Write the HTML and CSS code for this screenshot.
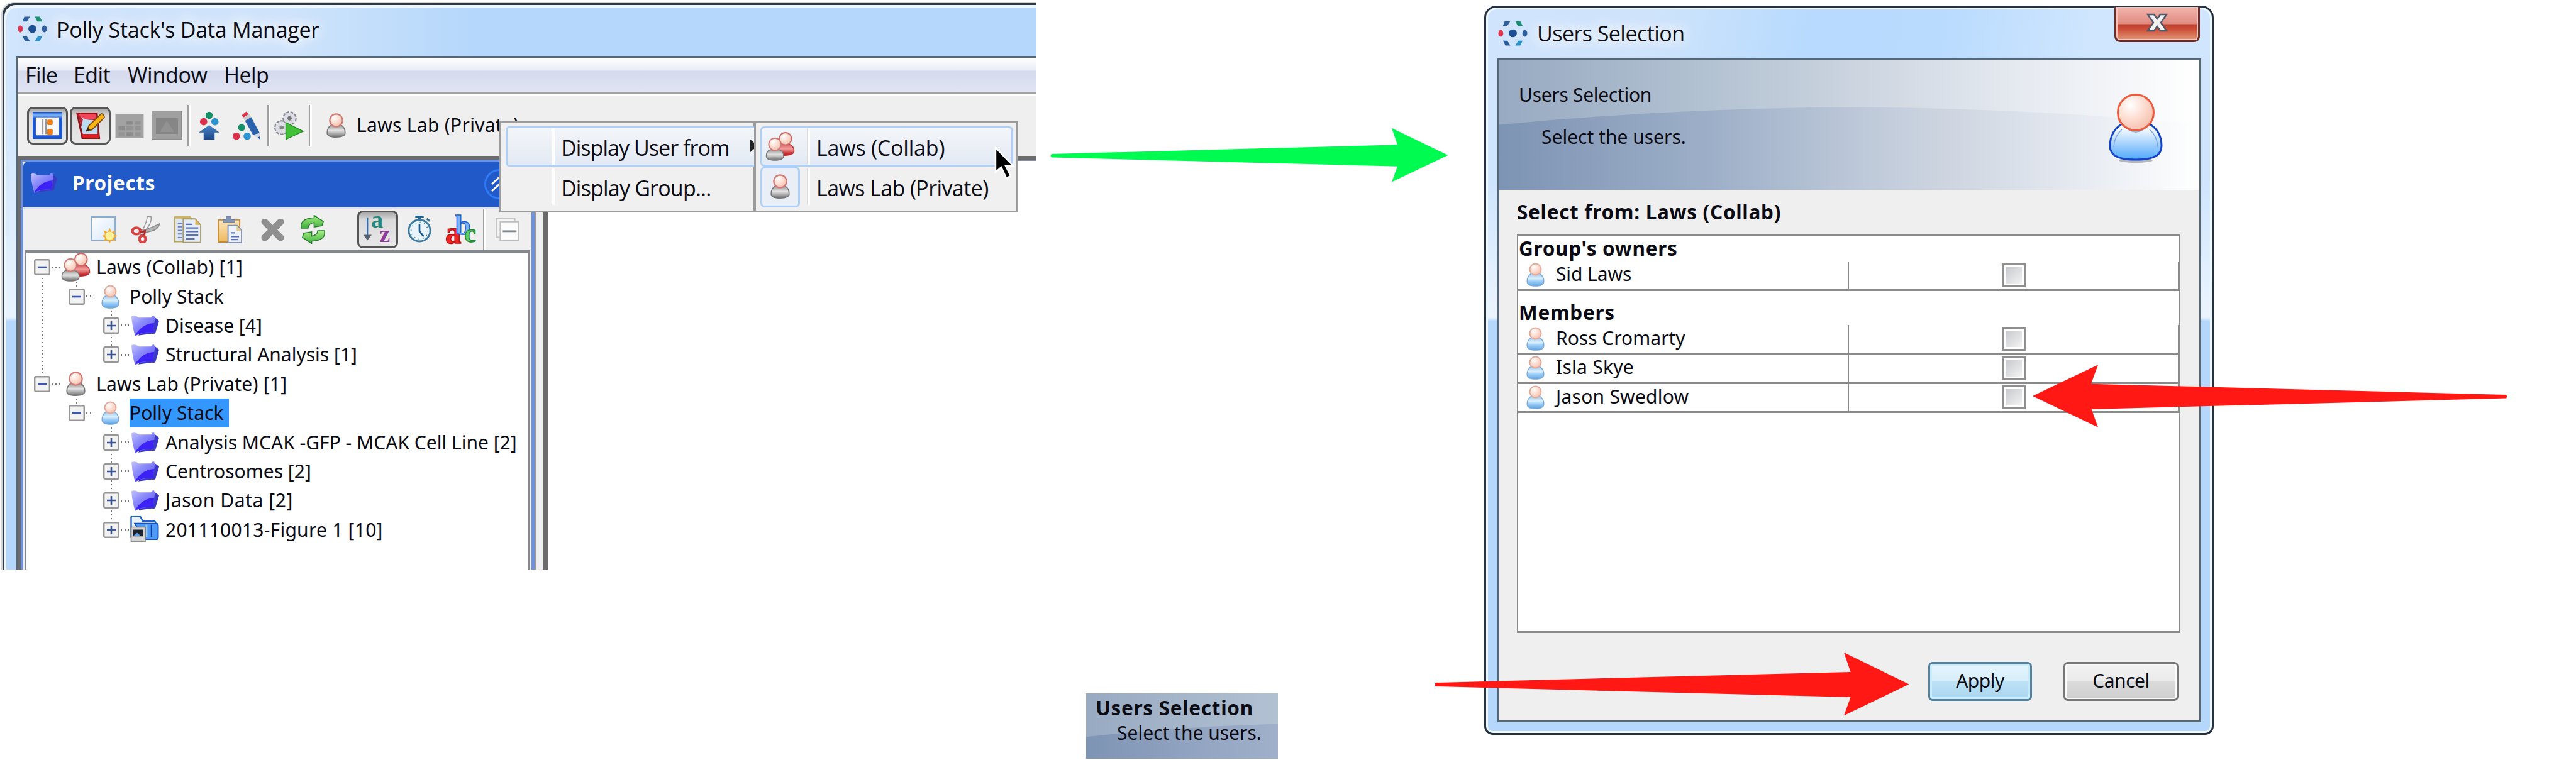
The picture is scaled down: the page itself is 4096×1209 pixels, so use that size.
FILE: index.html
```html
<!DOCTYPE html>
<html lang="en">
<head>
<meta charset="utf-8">
<title>Polly Stack's Data Manager</title>
<link rel="stylesheet" href="styles.css">
</head>
<body>
<svg class="sprite" width="0" height="0" aria-hidden="true">
  <defs>
    <radialGradient id="skin" cx=".35" cy=".3" r=".8"><stop offset="0" stop-color="#fff"/><stop offset=".5" stop-color="#fddccf"/><stop offset="1" stop-color="#f3bba8"/></radialGradient>
    <linearGradient id="bodyBlue" x2="0" y2="1"><stop offset=".1" stop-color="#fff"/><stop offset="1" stop-color="#4fa8fb"/></linearGradient>
    <linearGradient id="bodySoft" x2="0" y2="1"><stop offset="0" stop-color="#9cc8f2"/><stop offset=".4" stop-color="#dcf0fc"/><stop offset=".6" stop-color="#9fd0f8"/><stop offset="1" stop-color="#5fa0e0"/></linearGradient>
    <linearGradient id="bodyGrey" x2="0" y2="1"><stop offset="0" stop-color="#999"/><stop offset=".45" stop-color="#e2e2e2"/><stop offset="1" stop-color="#6e6e6e"/></linearGradient>
    <linearGradient id="bodyRed" x2="0" y2="1"><stop offset="0" stop-color="#e06060"/><stop offset=".4" stop-color="#f09a9a"/><stop offset="1" stop-color="#b80d14"/></linearGradient>
    <linearGradient id="folder" x1="0" y1="0" x2=".9" y2="1"><stop offset="0" stop-color="#c4c4ff"/><stop offset=".4" stop-color="#8c8cfb"/><stop offset="1" stop-color="#5a50f8"/></linearGradient>
    <linearGradient id="arrowBlue" x2="0" y2="1"><stop offset="0" stop-color="#4a86cc"/><stop offset="1" stop-color="#1c4684"/></linearGradient>
    <linearGradient id="winBlue" x2="0" y2="1"><stop offset="0" stop-color="#1450c8"/><stop offset=".12" stop-color="#7db4f8"/><stop offset=".25" stop-color="#1a56d2"/></linearGradient>
    <linearGradient id="paper" x2="1" y2="1"><stop offset="0" stop-color="#fff"/><stop offset="1" stop-color="#d5e6fa"/></linearGradient>
    <linearGradient id="gold" x2="0" y2="1"><stop offset="0" stop-color="#fbe6bd"/><stop offset="1" stop-color="#edb95c"/></linearGradient>
    <linearGradient id="green" x2="0" y2="1"><stop offset="0" stop-color="#a6ee86"/><stop offset="1" stop-color="#3fae3a"/></linearGradient>
  </defs>
  <symbol id="user-big" viewBox="-2 -2 88 112"><ellipse cx="42" cy="105" rx="27" ry="4" fill="#777" opacity=".5"/><path d="M22 46C8 54 1 66 1 82C1 97 13 104 42 104C71 104 83 97 83 82C83 66 76 54 62 46Z" fill="url(#bodyBlue)" stroke="#1544c8" stroke-width="3"/><path d="M20 56Q8 66 7 84M64 56Q76 66 77 84" fill="none" stroke="#7aa4ee" stroke-width="1.5"/><path d="M22 50Q42 72 62 50" fill="#7fbcf8"/><circle cx="42" cy="29" r="28.5" fill="url(#skin)" stroke="#ee5a3c" stroke-width="3"/></symbol>
  <symbol id="user-blue" viewBox="0 0 30 40"><path d="M8 18C2 22 1 27 1 31C1 36 5 39 15 39S29 36 29 31C29 27 28 22 22 18Z" fill="url(#bodySoft)" stroke="#7ba9dc" stroke-width="1.5"/><circle cx="15" cy="11" r="9.5" fill="url(#skin)" stroke="#e0a898" stroke-width="2"/></symbol>
  <symbol id="user-grey" viewBox="0 0 32 42"><path d="M8 20C2 23 1 28 1 33C1 37 6 40 16 40S31 37 31 33C31 28 30 23 24 20Z" fill="url(#bodyGrey)" stroke="#777" stroke-width="1.8"/><circle cx="16" cy="12" r="10.6" fill="url(#skin)" stroke="#cf7b78" stroke-width="2.4"/></symbol>
  <symbol id="users" viewBox="0 0 47 47"><path d="M24 20C19 23 18 27 18 31C18 36 22 38 31 38S46 36 46 31C46 27 45 23 39 20Z" fill="url(#bodyRed)" stroke="#b33" stroke-width="1.5"/><circle cx="32" cy="11" r="10" fill="url(#skin)" stroke="#c96a68" stroke-width="2"/><path d="M7 29C2 31 1 35 1 39C1 43 5 46 15 46S29 43 29 39C29 35 28 31 22 29Z" fill="url(#bodyGrey)" stroke="#777" stroke-width="1.5"/><circle cx="15" cy="20" r="10" fill="url(#skin)" stroke="#cf7b78" stroke-width="2"/></symbol>
  <symbol id="folder-i" viewBox="0 0 46 34"><path d="M37 2L46 9L40 29Q39 31 34 30L12 33Z" fill="#3a38c4"/><path d="M1 2Q7 -1 13 4H33Q34 0 38 1L39 6L36 28Q20 27 7 34Q2 18 1 2Z" fill="url(#folder)"/><path d="M38 13Q18 14 7 33Q20 27 36 28Z" fill="#3d22f6"/></symbol>
  <symbol id="screen" viewBox="0 0 46 44"><path d="M1 30V2Q1 0 4 0L16 1L20 8H37Q41 8 41 12V34H1Z" fill="#eaf3fe" stroke="#1b62cf" stroke-width="2.4"/><path d="M7 12H42Q45 12 45 16V34Q45 38 42 38H22L12 20Z" fill="#4f9af4" stroke="#1450be" stroke-width="2"/><path d="M34 14V34" stroke="#0d3ea6" stroke-width="2"/><path d="M26 14V34" stroke="#9ccaff" stroke-width="3"/><path d="M1 18H24V42H1Z" fill="#d4d4d4" stroke="#777" stroke-width="1.6"/><path d="M4 22H20V33H4Z" fill="#1a222c"/><path d="M5 32L11 27L16 32Z" fill="#5aa0f0"/></symbol>
  <symbol id="ring" viewBox="0 0 48 40"><circle cx="24" cy="20" r="6.5" fill="#1e4f92"/><ellipse cx="4.5" cy="20" rx="4" ry="5.5" fill="#e0354f"/><ellipse cx="43.5" cy="20" rx="4" ry="5.5" fill="#28599c"/><path d="M11 0H20L15 8H8Z" fill="#2c5c9c"/><path d="M28 0H36L40 8H32Z" fill="#1a9070"/><path d="M8 32H15L20 40H12Z" fill="#2c5c9c"/><path d="M33 32H40L36 40H28Z" fill="#2a93cf"/></symbol>
  <symbol id="treewin" viewBox="0 0 48 44"><path d="M0 0H48V44H0Z" fill="url(#winBlue)"/><path d="M5 9H43V38H5Z" fill="#f8f8fc"/><path d="M16 12V36M21 12V36" fill="none" stroke="#999" stroke-width="3"/><path d="M21 17H26M21 33H26" stroke="#999" stroke-width="2"/><rect x="23.500" y="12.500" width="9" height="9" rx="2" fill="#f07c14"/><rect x="23.500" y="28" width="9" height="9" rx="2" fill="#f07c14"/></symbol>
  <symbol id="note" viewBox="0 0 48 44"><path d="M1 1H36L40 44H10Z" fill="#8e1414"/><path d="M4 3L32 3Q38 12 26 13L15 11L12 36Z" fill="#f4465a"/><path d="M5 6L15 12L24 13L36 14V36H12Z" fill="#bcdcf4"/><path d="M11 36H38V42H12Z" fill="#e01c20"/><path d="M2 1L12 12L10 24Z" fill="#b02030"/><path d="M18 31L22 22L42 3Q47 4 47 9L27 29Z" fill="#f8b414" stroke="#7a4a10" stroke-width="1.8"/><path d="M17 32L20 26L24 29Z" fill="#222"/></symbol>
  <symbol id="grid" viewBox="0 0 46 40"><path d="M0 0H46V40H0Z" fill="#a2a2a2"/><path d="M5 20H15V27H5ZM18 12H29V18H18ZM18 30H29V36H18Z" fill="#8c8c8c"/><path d="M18 20H29V27H18ZM32 12H41V18H32ZM32 20H41V27H32ZM32 30H41V36H32ZM5 30H15V36H5Z" fill="#949494"/></symbol>
  <symbol id="photo" viewBox="0 0 48 46"><path d="M0 0H48V46H0Z" fill="#a0a0a0"/><path d="M6 11H41V36H6Z" fill="#868686"/><path d="M12 33L23 15L35 33Z" fill="#929292"/><path d="M47 0V45H0" fill="none" stroke="#8a8a8a" stroke-width="2"/></symbol>
  <symbol id="upload" viewBox="0 0 34 46"><circle cx="17" cy="6" r="5.800" fill="#149068"/><circle cx="8" cy="16.500" r="6" fill="#dc2f4c"/><circle cx="26.500" cy="16.500" r="6" fill="#2a93d0"/><path d="M17 22L34 34H26V46H8V34H0Z" fill="url(#arrowBlue)"/></symbol>
  <symbol id="pencil" viewBox="0 0 46 46"><circle cx="14.500" cy="26" r="5.800" fill="#149068"/><circle cx="6" cy="40" r="6" fill="#dc2f4c"/><circle cx="23.500" cy="40" r="6" fill="#2a93d0"/><path d="M15 6L22 0L26 4L17 10Z" fill="#dc2f4c"/><path d="M17 10L27 4L30 9L20 15Z" fill="#ccc"/><path d="M20 15L30 9L44 35L33 38Z" fill="#2a62ac"/><path d="M33 38L44 35L45 46Z" fill="#cdd6e4"/><path d="M41 42L45 40V46Z" fill="#1c4684"/></symbol>
  <symbol id="gears" viewBox="0 0 48 46"><circle cx="25" cy="11" r="8" fill="none" stroke="#85858f" stroke-width="7" stroke-dasharray="4 1.500"/><circle cx="12" cy="26" r="8.500" fill="none" stroke="#85858f" stroke-width="7" stroke-dasharray="4 1.500"/><circle cx="25" cy="11" r="7" fill="none" stroke="#dcdce6" stroke-width="5"/><circle cx="12" cy="26" r="7.500" fill="none" stroke="#dcdce6" stroke-width="5"/><circle cx="25" cy="11" r="3.500" fill="#777"/><circle cx="12" cy="26" r="3.500" fill="#888"/><path d="M19 18L47 32L19 45Z" fill="#44c038" stroke="#2a8a2a" stroke-width="1.500"/></symbol>
  <symbol id="new" viewBox="0 0 44 44"><path d="M1 1H40V39H1Z" fill="url(#paper)" stroke="#85add6" stroke-width="2"/><path d="M31 19L34 26L41 23L38 30L44 32L38 35L41 41L34 39L31 44L28 39L21 41L24 35L18 32L24 30L21 23L28 26Z" fill="#f6a92a"/><circle cx="31" cy="32" r="7" fill="#fff29a"/></symbol>
  <symbol id="cut" viewBox="0 0 48 44"><path d="M27 0L33 1Q34 10 26 20L20 28L17 25Q25 14 27 0Z" fill="#f4f4f4" stroke="#999" stroke-width="1.600"/><path d="M47 12Q44 22 34 24L22 27L20 23L34 18Z" fill="#b4b4b4" stroke="#8a8a8a" stroke-width="1.500"/><ellipse cx="9" cy="24" rx="6.500" ry="5" fill="none" stroke="#d84444" stroke-width="4.500"/><ellipse cx="19" cy="37" rx="5" ry="5.500" fill="none" stroke="#d84444" stroke-width="4.500"/><path d="M15 26L23 24L22 31" fill="none" stroke="#b02c2c" stroke-width="3"/></symbol>
  <symbol id="copy" viewBox="0 0 46 44"><path d="M1 1H26L32 7V42H1Z" fill="#dfe6f2" stroke="#b9a750" stroke-width="2"/><path d="M2 1.500H26L31 7" fill="none" stroke="#ccb463" stroke-width="4"/><path d="M6 11H14M6 17H14M6 23H14M6 29H14M6 35H14" stroke="#6b80bd" stroke-width="2"/><path d="M15 4H35L44 14V43H15Z" fill="#e6ecf7" stroke="#a49a6a" stroke-width="2"/><path d="M35 4V14H44Z" fill="#d9b95c"/><path d="M19 13H30M19 19H40M19 25H40M19 31H40M19 37H34" stroke="#5a70b4" stroke-width="2.400"/></symbol>
  <symbol id="paste" viewBox="0 0 40 44"><path d="M1 6H36V42H1Z" fill="url(#gold)" stroke="#c48a3c" stroke-width="2"/><path d="M9 10V6L14 5V0H22V5L28 6V10Z" fill="#8493b4" stroke="#6a789a"/><path d="M17 15H32L39 23V43H17Z" fill="#eef2fa" stroke="#8593b8" stroke-width="2"/><path d="M31 15V24H39Z" fill="#e6cf8c"/><path d="M22 27H28M22 33H35M22 38H33" stroke="#5a70b4" stroke-width="2.400"/></symbol>
  <symbol id="cross" viewBox="0 0 40 36"><path d="M7 5L33 31M33 5L7 31" stroke="#8f8f8f" stroke-width="11" stroke-linecap="round"/></symbol>
  <symbol id="refresh" viewBox="0 0 42 46"><path d="M2 21V15Q4 5 23 4V0L38 10L36 17L23 19V12Q14 13 13 21Z" fill="url(#green)" stroke="#2c7d34" stroke-width="1.600"/><path d="M40 25V31Q38 41 19 42V46L4 36L6 29L19 27V34Q28 33 29 25Z" fill="url(#green)" stroke="#2c7d34" stroke-width="1.600"/></symbol>
  <symbol id="clock" viewBox="0 0 40 46"><path d="M13 0H27V3H23V7H17V3H13Z" fill="#22628f"/><path d="M32 5L37 9" stroke="#2f7099" stroke-width="3"/><circle cx="20" cy="25" r="18" fill="#e8f5fb" stroke="#3b7ba3" stroke-width="3"/><circle cx="20" cy="25" r="14" fill="none" stroke="#4f87a8" stroke-width="2" stroke-dasharray="1.500 5.830"/><path d="M20 14V26L27 35" fill="none" stroke="#1d5c8c" stroke-width="2.800"/></symbol>
  <symbol id="collapse" viewBox="0 0 40 40"><path d="M1 1H32V33H1Z" fill="#f4f4f4" stroke="#c4c4c4" stroke-width="2.500"/><path d="M8 7H39V39H8Z" fill="#fbfbfb" stroke="#bdbdbd" stroke-width="2.500"/><path d="M12 23H35" stroke="#7d8790" stroke-width="3"/></symbol>
  <symbol id="plus" viewBox="0 0 26 26"><rect x="1.200" y="1.200" width="23.600" height="23.600" rx="2" fill="#f2f2f2" stroke="#979797" stroke-width="2.400"/><path d="M6 13H20M13 6V20" stroke="#3a5498" stroke-width="2.600"/></symbol>
  <symbol id="minus" viewBox="0 0 26 26"><rect x="1.200" y="1.200" width="23.600" height="23.600" rx="2" fill="#f2f2f2" stroke="#979797" stroke-width="2.400"/><path d="M6 13H20" stroke="#3a58b0" stroke-width="2.600"/></symbol>
</svg>

<section class="main-window">
  <header class="main-title"><svg class="ring"><use href="#ring"/></svg><span class="seg title-text">Polly Stack's Data Manager</span></header>
  <div class="main-client">
    <nav class="menubar seg"><span class="m-file">File</span><span class="m-edit">Edit</span><span class="m-window">Window</span><span>Help</span></nav>
    <div class="toolbar">
      <span class="pressed"><svg class="i48x44"><use href="#treewin"/></svg></span>
      <span class="pressed"><svg class="i48x44"><use href="#note"/></svg></span>
      <svg class="t-grid"><use href="#grid"/></svg>
      <svg class="t-photo"><use href="#photo"/></svg>
      <i class="sep s1"></i>
      <svg class="t-upload"><use href="#upload"/></svg>
      <svg class="t-pencil"><use href="#pencil"/></svg>
      <i class="sep s2"></i>
      <svg class="t-gears"><use href="#gears"/></svg>
      <i class="sep s3"></i>
      <svg class="t-user"><use href="#user-grey"/></svg>
      <span class="tah toolbar-text">Laws Lab (Private)</span>
    </div>
    <div class="workspace">
      <aside class="panel">
        <div class="panel-head"><svg class="head-folder"><use href="#folder-i"/></svg><b class="tah projects">Projects</b>
          <svg class="head-toggle" viewBox="0 0 48 48"><circle cx="24" cy="24" r="22.500" fill="none" stroke="#2f7bf5" stroke-width="3"/><path d="M12 24L24 13L36 24M12 35L24 24L36 35" fill="none" stroke="#fff" stroke-width="3"/></svg></div>
        <div class="panel-tools">
          <svg class="p-new"><use href="#new"/></svg>
          <svg class="p-cut"><use href="#cut"/></svg>
          <svg class="p-copy"><use href="#copy"/></svg>
          <svg class="p-paste"><use href="#paste"/></svg>
          <svg class="p-cross"><use href="#cross"/></svg>
          <svg class="p-refresh"><use href="#refresh"/></svg>
          <span class="pressed p-az"><svg class="i48x46" viewBox="0 0 48 46"><path d="M7 4V40" stroke="#2f6fae" stroke-width="2.400"/><path d="M0 33H14L7 42Z" fill="#55606e"/><text x="13" y="21" class="glyph-a">a</text><text x="27" y="45" class="glyph-z">z</text></svg></span>
          <svg class="p-clock"><use href="#clock"/></svg>
          <svg class="p-abc" viewBox="0 0 48 46"><text x="-1" y="45" class="glyph-ra">a</text><text x="15" y="31" class="glyph-rb">b</text><text x="30" y="43" class="glyph-rc">c</text></svg>
          <i class="sep p-sep"></i>
          <svg class="p-collapse"><use href="#collapse"/></svg>
        </div>
        <div class="tree tah">
          <i class="guide g1"></i><i class="guide g2"></i><i class="guide g3"></i><i class="guide g4"></i><i class="guide g5"></i>
          <div class="node l1"><svg class="exp"><use href="#minus"/></svg><i class="dots"></i><span class="ic"><svg class="users"><use href="#users"/></svg></span><span class="lb wide">Laws (Collab) [1]</span></div>
          <div class="node l2"><svg class="exp"><use href="#minus"/></svg><i class="dots"></i><span class="ic"><svg class="ub"><use href="#user-blue"/></svg></span><span class="lb">Polly Stack</span></div>
          <div class="node l3"><svg class="exp"><use href="#plus"/></svg><i class="dots"></i><span class="ic"><svg class="fo"><use href="#folder-i"/></svg></span><span class="lb">Disease [4]</span></div>
          <div class="node l3"><svg class="exp"><use href="#plus"/></svg><i class="dots"></i><span class="ic"><svg class="fo"><use href="#folder-i"/></svg></span><span class="lb">Structural Analysis [1]</span></div>
          <div class="node l1"><svg class="exp"><use href="#minus"/></svg><i class="dots"></i><span class="ic"><svg class="ug"><use href="#user-grey"/></svg></span><span class="lb wide">Laws Lab (Private) [1]</span></div>
          <div class="node l2"><svg class="exp"><use href="#minus"/></svg><i class="dots"></i><span class="ic"><svg class="ub"><use href="#user-blue"/></svg></span><span class="lb selected">Polly Stack</span></div>
          <div class="node l3"><svg class="exp"><use href="#plus"/></svg><i class="dots"></i><span class="ic"><svg class="fo"><use href="#folder-i"/></svg></span><span class="lb">Analysis MCAK -GFP - MCAK Cell Line [2]</span></div>
          <div class="node l3"><svg class="exp"><use href="#plus"/></svg><i class="dots"></i><span class="ic"><svg class="fo"><use href="#folder-i"/></svg></span><span class="lb">Centrosomes [2]</span></div>
          <div class="node l3"><svg class="exp"><use href="#plus"/></svg><i class="dots"></i><span class="ic"><svg class="fo"><use href="#folder-i"/></svg></span><span class="lb wider">Jason Data [2]</span></div>
          <div class="node l3"><svg class="exp"><use href="#plus"/></svg><i class="dots"></i><span class="ic"><svg class="sc"><use href="#screen"/></svg></span><span class="lb wide">201110013-Figure 1 [10]</span></div>
        </div>
      </aside>
      <div class="splitter"></div>
      <div class="canvas"></div>
    </div>
  </div>
</section>

<div class="popup popup-a seg">
  <div class="item hot"><span class="gutter"></span><span>Display User from</span><i class="tri"></i></div>
  <div class="item group-item"><span class="gutter"></span><span>Display Group...</span></div>
</div>
<div class="popup popup-b seg">
  <div class="item hot"><span class="gutter"><svg class="users"><use href="#users"/></svg></span><span>Laws (Collab)</span></div>
  <div class="item"><span class="gutter"><span class="check"><svg class="ug"><use href="#user-grey"/></svg></span></span><span class="private">Laws Lab (Private)</span></div>
</div>
<svg class="cursor" viewBox="0 0 32 52"><path d="M2 2V41L11 33L19 50L26 47L18 31H30Z" fill="#000" stroke="#fff" stroke-width="2.400"/></svg>

<section class="dialog">
  <header class="dialog-title"><svg class="ring"><use href="#ring"/></svg><span class="seg title-text">Users Selection</span>
    <span class="close"><svg viewBox="0 0 34 30"><path d="M2 2H12L17 9L22 2H32L23 15L32 28H22L17 21L12 28H2L11 15Z" fill="#f2f2f2" stroke="#555766" stroke-width="2.500"/></svg></span></header>
  <div class="dialog-client">
    <div class="banner">
      <svg class="swoosh" viewBox="0 0 1114 207" preserveAspectRatio="none"><defs><linearGradient id="lower" x2="1" y2="0"><stop offset="0" stop-color="#7e94b4"/><stop offset=".3" stop-color="#9dafc8"/><stop offset=".53" stop-color="#bfcada"/><stop offset=".65" stop-color="#cfd6e1"/><stop offset=".8" stop-color="#e2e7ef"/><stop offset="1" stop-color="#fff"/></linearGradient></defs><path d="M0 103Q300 74 600 75Q860 78 1114 102V207H0Z" fill="url(#lower)"/></svg>
      <div class="banner-text tah"><span class="head">Users Selection</span><span class="sub">Select the users.</span></div>
      <svg class="big-user"><use href="#user-big"/></svg>
    </div>
    <b class="from tah">Select from: Laws (Collab)</b>
    <div class="table tah">
      <div class="group"><b>Group's owners</b></div>
      <div class="row"><span class="cell"><svg class="ub"><use href="#user-blue"/></svg><span class="tight">Sid Laws</span></span><span class="cell2"><i class="box"></i></span></div>
      <div class="group second"><b>Members</b></div>
      <div class="row"><span class="cell"><svg class="ub"><use href="#user-blue"/></svg><span>Ross Cromarty</span></span><span class="cell2"><i class="box"></i></span></div>
      <div class="row"><span class="cell"><svg class="ub"><use href="#user-blue"/></svg><span class="wide">Isla Skye</span></span><span class="cell2"><i class="box"></i></span></div>
      <div class="row"><span class="cell"><svg class="ub"><use href="#user-blue"/></svg><span class="wide">Jason Swedlow</span></span><span class="cell2"><i class="box"></i></span></div>
    </div>
    <div class="buttons tah"><span class="btn apply">Apply</span><span class="btn cancel">Cancel</span></div>
  </div>
</section>

<figure class="thumb tah">
  <svg class="swoosh" viewBox="0 0 305 105" preserveAspectRatio="none"><defs><linearGradient id="lower2" x2="1" y2="0"><stop offset="0" stop-color="#7e94b4"/><stop offset="1" stop-color="#a0b0ca"/></linearGradient></defs><path d="M0 70Q140 54 305 49V105H0Z" fill="url(#lower2)"/></svg>
  <b>Users Selection</b><span class="sub">Select the users.</span>
</figure>

<svg class="arrows" viewBox="0 0 4096 1209">
  <path d="M1672 245L2222 230.300L2213 203.800L2302.400 247L2213 289.400L2222 264.800L1672 250.400Q1669.500 247.500 1672 245Z" fill="#00fb50"/>
  <path d="M3232 630L3336 580.300L3325 610.800L3985 628Q3987.500 631 3985 633.600L3325.600 651L3336 679.700Z" fill="#ff1814"/>
  <path d="M2282 1086L2942.600 1069L2932 1038L3035.400 1088.400L2932 1138.300L2942.600 1109L2282 1092Z" fill="#ff1814"/>
</svg>
</body>
</html>
```
FILE: styles.css
```css
* { box-sizing: border-box; }
body { margin: 0; width: 4096px; height: 1209px; position: relative; overflow: hidden; background: #fff; color: #0b0b14; }
svg { display: block; flex: none; overflow: visible; }
i { font-style: normal; display: block; flex: none; }
.sprite { position: absolute; }
.seg { font: 34px/46px "Open Sans", "Noto Sans", sans-serif; white-space: nowrap; }
.tah { font: 30px/40px "Noto Sans", "Open Sans", sans-serif; white-space: nowrap; }
.tah b, b.tah { font-weight: 700; font-size: 31.5px; letter-spacing: 0.7px; }
.tight { letter-spacing: -0.1px; }
.wide { letter-spacing: 0.25px; }
.wider { letter-spacing: 0.57px; }

.glyph-a { font: bold 40px "Liberation Serif", serif; fill: #1f8a7d; }
.glyph-z { font: bold 40px "Liberation Serif", serif; fill: #8d3a96; }
.glyph-ra { font: bold 52px "Liberation Serif", serif; fill: #ee2626; stroke: #c01010; stroke-width: 1.5px; }
.glyph-rb { font: bold 45px "Liberation Serif", serif; fill: #7ab4fb; stroke: #1f5fd0; stroke-width: 1.5px; }
.glyph-rc { font: bold 42px "Liberation Serif", serif; fill: #5fd070; stroke: #1f8a30; stroke-width: 1.5px; }

/* main window */
.main-window { position: absolute; left: 2px; top: 3px; width: 1646px; height: 903px; border: 2px solid #d4d4d4; border-width: 2px 0 0 2px; border-top-left-radius: 20px; overflow: hidden; box-shadow: inset 3px 3px 0 #2e3a46, inset 6px 7px 0 #eef6ff; background: linear-gradient(#d2e7fd, #cfe5fd 150px, #e8f3fe 500px, #b5d7fb 506px) 0 0 / 24px 100% no-repeat, linear-gradient(90deg, #d0e4fb, #cfe4fb 450px, #b5d7fb 750px); }
.main-title { height: 84px; display: flex; align-items: center; padding: 2px 0 4px 24px; }
.ring { width: 47px; height: 40px; }
.title-text { margin-left: 15px; padding-top: 1px; letter-spacing: -0.24px; text-shadow: 0 0 22px #fff, 0 0 22px #fff, 0 0 30px #fff; }
.main-client { margin-left: 21px; height: 817px; border: 3px solid #566878; border-width: 3px 0 0 3px; background: #efefef; display: flex; flex-direction: column; overflow: hidden; }
.menubar { flex: none; height: 60px; display: flex; align-items: center; padding: 0 0 3px 12px; border-bottom: 3px solid #fff; background: linear-gradient(#fff, #e9ecf5 20px, #d4daed 21px, #e0e4f4 54px, #a2a2a2 54px, #a2a2a2 57px); letter-spacing: -0.6px; }
.m-file { width: 77px; } .m-edit { width: 86px; } .m-window { width: 153px; letter-spacing: -0.3px; }
.toolbar { flex: none; height: 96px; display: flex; align-items: center; padding-left: 15px; background: #efefef; }
.pressed { flex: none; width: 65px; height: 60px; border: 3px solid #555; border-radius: 9px; display: flex; align-items: center; justify-content: center; padding-bottom: 2px; background: linear-gradient(#a8a8a8, #dadada 12px, #e8e8e8); }
.pressed + .pressed { margin-left: 3px; }
.i48x44 { width: 47px; height: 43px; } .i48x46 { width: 47px; height: 44px; }
.t-grid { width: 46px; height: 39px; margin-left: 7px; }
.t-photo { width: 48px; height: 46px; margin-left: 13px; }
.sep { width: 5px; height: 66px; background: linear-gradient(90deg, #a0a0a0 2px, #fff 2px); }
.s1 { margin-left: 8px; }
.t-upload { width: 33px; height: 46px; margin-left: 13px; }
.t-pencil { width: 45px; height: 46px; margin-left: 21px; }
.s2 { margin-left: 10px; }
.t-gears { width: 47px; height: 46px; margin-left: 6px; }
.s3 { margin-left: 8px; }
.t-user { width: 31px; height: 40px; margin-left: 23px; }
.toolbar-text { margin-left: 17px; padding-bottom: 3px; letter-spacing: 0.3px; }
.workspace { flex: 1; display: flex; background: #6b6b6b; padding-top: 6px; padding-left: 5px; }
.panel { flex: none; width: 817px; border: 4px solid #7092de; border-width: 3px 5px 0 4px; background: #efefef; }
.panel-head { height: 72px; display: flex; align-items: center; background: #2159c8; border-top-left-radius: 8px; padding: 0 27px 4px 11px; }
.head-folder { width: 43px; height: 34px; }
.panel-head .projects { line-height: 40px; margin-left: 24px; flex: 1; color: #fff; }
.head-toggle { width: 48px; height: 48px; margin-top: 3px; }
.panel-tools { height: 69px; display: flex; align-items: center; padding-left: 107px; border-top: 3px solid #d9e3f8; }
.p-new { width: 43px; height: 43px; }
.p-cut { width: 47px; height: 43px; margin-left: 21px; }
.p-copy { width: 44px; height: 43px; margin-left: 22px; }
.p-paste { width: 39px; height: 43px; margin-left: 25px; }
.p-cross { width: 39px; height: 35px; margin-left: 29px; }
.p-refresh { width: 41px; height: 46px; margin-left: 24px; }
.p-az { margin-left: 50px; }
.p-clock { width: 38px; height: 44px; margin-left: 15px; }
.p-abc { width: 47px; height: 46px; margin-left: 23px; }
.p-sep { margin-left: 12px; }
.p-collapse { width: 38px; height: 38px; margin-left: 15px; }
.tree { position: relative; margin: 0 3px; height: 520px; background: #fff; border: 2px solid #828790; border-top-width: 4px; border-bottom: 0; }
.node { position: relative; height: 46.400px; display: flex; align-items: center; }
.l1 { padding-left: 12px; } .l2 { padding-left: 67px; } .l3 { padding-left: 122px; }
.exp { width: 26px; height: 26px; }
.dots { width: 15px; height: 3px; margin: 0 2px 0 0; background: repeating-linear-gradient(90deg, #fff 0 2px, #777 2px 4px, #fff 4px 6px); }
.ic { width: 46px; display: flex; justify-content: center; flex: none; }
.users { width: 47px; height: 46px; }
.ub { width: 29px; height: 38px; } .ug { width: 31px; height: 40px; } .fo { width: 45px; height: 34px; } .sc { width: 46px; height: 43px; }
.lb { margin-left: 10px; height: 46px; line-height: 45px; }
.l2 .lb { margin-left: 8px; }
.selected { background: #3397fe; padding-right: 9px; }
.guide { position: absolute; width: 2px; background: repeating-linear-gradient(#fff 0 2px, #777 2px 4px, #fff 4px 6px); }
.g1 { left: 24px; top: 38px; height: 154px; }
.g2 { left: 79px; top: 44px; height: 14px; }
.g3 { left: 134px; top: 90px; height: 62px; }
.g4 { left: 79px; top: 230px; height: 14px; }
.g5 { left: 134px; top: 276px; height: 150px; }
.splitter { flex: none; width: 21px; background: linear-gradient(90deg, #a0a0a0 2px, #efefef 2px 13px, #6b6b6b 13px); }
.canvas { flex: 1; background: #fff; border-top: 2px solid #8890a0; }

/* popup menus */
.popup { position: absolute; top: 193px; height: 145px; background: #f0f0f0; border: 3px solid #9b9b9b; padding-top: 5px; display: flex; flex-direction: column; }
.popup-a { z-index: 1; left: 794px; width: 407px; padding-left: 7px; letter-spacing: -0.95px; }
.popup-b { z-index: 2; left: 1199px; width: 420px; padding-left: 7px; padding-right: 5px; letter-spacing: -0.2px; }
.private { letter-spacing: -0.6px; }
.group-item { letter-spacing: -0.8px; }
.item { height: 64px; display: flex; align-items: center; border: 3px solid transparent; border-radius: 6px; }
.item > span + span { padding-top: 3px; }
.hot { border-color: #aed0f7; background: linear-gradient(#f3f5f8, #e3eaf5); }
.popup-a .item { width: 405px; }
.gutter { align-self: stretch; width: 75px; margin-right: 10px; flex: none; display: flex; align-items: center; border-right: 4px solid #fdfdfd; box-shadow: inset -1px 0 #ddd; padding-left: 5px; }
.popup-b .gutter { width: 76px; margin-right: 10px; }
.check { width: 63px; height: 65px; margin-left: -8px; flex: none; border: 3px solid #aed0f7; border-radius: 7px; background: #e9eef7; display: flex; align-items: center; justify-content: center; }
.tri { margin-left: 33px; border: 10px solid transparent; border-left: 12px solid #222; border-right: 0; margin-bottom: 2px; }
.cursor { position: absolute; z-index: 3; left: 1581px; top: 233px; width: 32px; height: 52px; }

/* dialog */
.dialog { position: absolute; left: 2360px; top: 9px; width: 1160px; height: 1160px; border: 3px solid #25323f; border-radius: 19px 19px 14px 14px; padding: 0 18px 17px; box-shadow: inset 0 0 0 3px #eef6ff; background: linear-gradient(#d0e5fd, #cfe5fd 200px, #ebf4fe 415px, #b5d7fb 421px) 0 78px / 24px 100% no-repeat, linear-gradient(#d0e5fd, #cfe5fd 200px, #ebf4fe 415px, #b5d7fb 421px) 100% 78px / 24px 100% no-repeat, linear-gradient(100deg, #d0e5fd, #cfe4fb 260px, #b7dafe 520px, #b9dbfe 720px, #d0e6fe 960px) 0 0 / 100% 90px no-repeat, #b5d7fb; }
.dialog-title { height: 81px; display: flex; align-items: center; }
.dialog-title .ring { margin-left: 1px; }
.dialog-title .title-text { flex: 1; padding-top: 0; letter-spacing: -0.55px; }
.close { align-self: flex-start; width: 136px; height: 56px; margin-right: 1px; margin-top: -1px; border: 3px solid #6e2a24; border-top: 0; border-radius: 0 0 9px 9px; box-shadow: inset 0 0 0 2px #f6c4be; display: flex; align-items: center; justify-content: center; padding-bottom: 4px; background: linear-gradient(#f3b5ad, #df8a80 27px, #b8402f 28px, #cf4f38 36px, #e09a7c); }
.close svg { width: 34px; height: 30px; }
.dialog-client { width: 1119px; height: 1056px; border: 3px solid #566878; background: #efefef; display: flex; flex-direction: column; }
.banner { position: relative; flex: none; height: 206px; display: flex; justify-content: space-between; background: linear-gradient(90deg, #98aac2, #b3c2d2 30%, #ced6e1 53%, #e3e8ef 72%, #f8f9fb 93%, #fff); }
.swoosh { position: absolute; inset: 0; width: 100%; height: 100%; }
.banner-text { position: relative; display: flex; flex-direction: column; gap: 27px; padding: 35px 0 0 31px; }
.banner-text .head { letter-spacing: -0.3px; }
.banner-text .sub { margin-left: 36px; }
.big-user { position: relative; width: 88px; height: 112px; margin: 52px 57px 0 0; }
.from { height: 70px; flex: none; padding: 15px 0 0 28px; }
.table { flex: none; margin-left: 28px; width: 1055px; height: 635px; border: 3px solid #8a8a8a; border-width: 3px 2px; background: #fff; }
.group { height: 41px; padding-left: 1px; }
.second { height: 54.500px; padding-top: 14px; }
.row { height: 46.700px; display: flex; border-bottom: 3px solid #8a8a8a; border-right: 2px solid #8a8a8a; }
.cell { width: 526px; display: flex; align-items: center; border-right: 2px solid #8a8a8a; padding: 0 0 3px 13px; }
.cell .ub { margin-top: 2px; margin-right: 18px; }
.cell2 { flex: 1; display: flex; align-items: center; justify-content: center; }
.box { width: 38px; height: 38px; border: 3px solid #8f8f8f; background: linear-gradient(135deg, #c6c8cc, #f4f4f4) content-box #f6f6f6; padding: 3px; }
.buttons { flex: 1; display: flex; justify-content: flex-end; padding: 46px 33px 0 0; }
.btn { height: 62px; border: 3px solid #777; border-radius: 7px; display: flex; align-items: center; justify-content: center; padding-bottom: 3px; box-shadow: inset 0 0 0 2px #fbfbfb; letter-spacing: -0.5px; }
.cancel { width: 183px; background: linear-gradient(#f2f2f2, #ebebeb 48%, #dcdcdc 50%, #cecece); }
.apply { width: 165px; margin-right: 50px; border-color: #54819e; box-shadow: inset 0 0 0 3px #c9ecfa; background: linear-gradient(#e6f5fc, #d6eefb 48%, #bde2f6 50%, #a8d6ee); }

/* cut-out of the banner */
.thumb { position: absolute; margin: 0; left: 1727px; top: 1103px; width: 305px; height: 104px; display: flex; flex-direction: column; padding: 3px 0 0 15px; background: linear-gradient(90deg, #98aac2, #b2c1d2); }
.thumb b, .thumb span { position: relative; }
.thumb .sub { margin-left: 34px; }

.arrows { position: absolute; inset: 0; width: 4096px; height: 1209px; z-index: 4; pointer-events: none; }
```
